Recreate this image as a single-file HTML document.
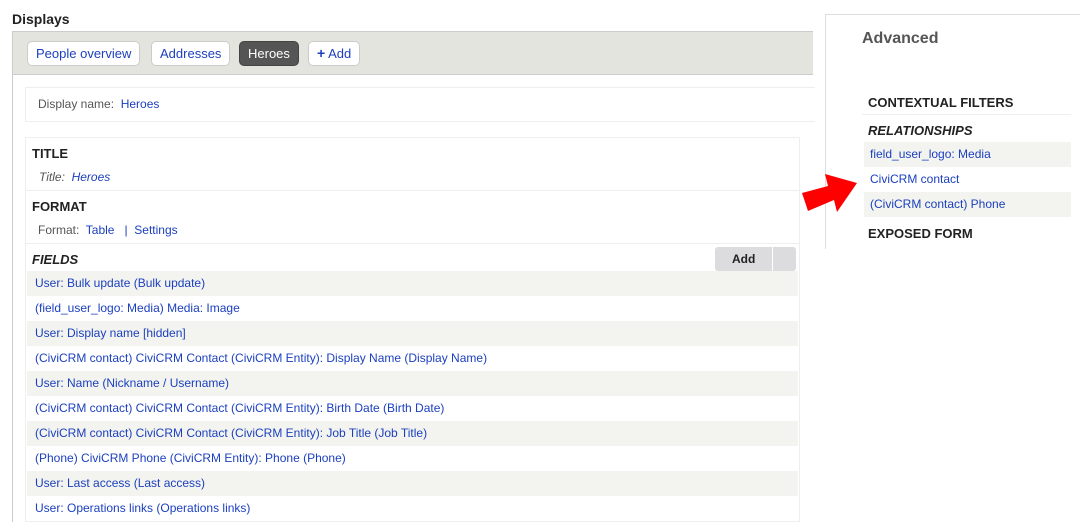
<!DOCTYPE html>
<html><head><meta charset="utf-8"><style>
*{box-sizing:border-box;margin:0;padding:0}
body{width:1080px;height:522px;overflow:hidden;background:#fff;font-family:"Liberation Sans",sans-serif;font-size:12px;color:#222;position:relative}
a,.l{color:#1b3fbf;text-decoration:none}
.abs{position:absolute}
.h{font-weight:bold;font-size:13px;color:#222}
.tab{position:absolute;top:41px;height:25px;border:1px solid #ccc;border-radius:5px;background:#fff;line-height:23px;padding:0 8px;font-size:13px}
.row{position:absolute;left:27px;width:771px;height:25px;line-height:25px;padding-left:8px}
.odd{background:#f3f4ef}
.rr{position:absolute;left:864px;width:207px;height:25px;line-height:25px;padding-left:6px}
</style></head><body>
<div class="abs h" style="left:12px;top:11px;font-size:14px">Displays</div>
<div class="abs" style="left:12px;top:31px;width:801px;height:491px;border-left:1px solid #ccc"></div>
<div class="abs" style="left:12px;top:31px;width:801px;height:44px;background:#e4e4df;border:1px solid #ccc;border-right:none"></div>
<div class="tab l" style="left:27px">People overview</div>
<div class="tab l" style="left:151px">Addresses</div>
<div class="tab" style="left:239px;background:#555;color:#fff;border-color:#444">Heroes</div>
<div class="tab l" style="left:308px"><b style="font-size:14px">+</b> Add</div>
<div class="abs" style="left:25px;top:87px;width:790px;height:35px;border:1px solid #eee;border-right:none;line-height:33px;padding-left:12px;color:#555">Display name:&nbsp; <span class="l">Heroes</span></div>
<div class="abs" style="left:25px;top:137px;width:775px;height:385px;border:1px solid #eee"></div>
<div class="abs h" style="left:32px;top:146px">TITLE</div>
<div class="abs" style="left:39px;top:170px;font-style:italic;color:#555">Title:&nbsp; <span class="l">Heroes</span></div>
<div class="abs" style="left:26px;top:190px;width:773px;border-top:1px solid #eee"></div>
<div class="abs h" style="left:32px;top:199px">FORMAT</div>
<div class="abs" style="left:38px;top:223px;color:#555">Format:&nbsp; <span class="l">Table</span> &nbsp;&nbsp;<span class="l">|</span>&nbsp; <span class="l">Settings</span></div>
<div class="abs" style="left:26px;top:243px;width:773px;border-top:1px solid #eee"></div>
<div class="abs h" style="left:32px;top:252px;font-style:italic">FIELDS</div>
<div class="abs" style="left:715px;top:247px;width:81px;height:24px;background:#dcdcdf;border-radius:3px;font-weight:bold;line-height:24px;padding-left:17px">Add<span class="abs" style="left:57px;top:0;height:24px;border-left:1px solid #fff"></span></div>
<div class="row odd l" style="top:271px">User: Bulk update (Bulk update)</div>
<div class="row l" style="top:296px">(field_user_logo: Media) Media: Image</div>
<div class="row odd l" style="top:321px">User: Display name [hidden]</div>
<div class="row l" style="top:346px">(CiviCRM contact) CiviCRM Contact (CiviCRM Entity): Display Name (Display Name)</div>
<div class="row odd l" style="top:371px">User: Name (Nickname / Username)</div>
<div class="row l" style="top:396px">(CiviCRM contact) CiviCRM Contact (CiviCRM Entity): Birth Date (Birth Date)</div>
<div class="row odd l" style="top:421px">(CiviCRM contact) CiviCRM Contact (CiviCRM Entity): Job Title (Job Title)</div>
<div class="row l" style="top:446px">(Phone) CiviCRM Phone (CiviCRM Entity): Phone (Phone)</div>
<div class="row odd l" style="top:471px">User: Last access (Last access)</div>
<div class="row l" style="top:496px">User: Operations links (Operations links)</div>
<div class="abs" style="left:825px;top:14px;width:260px;height:235px;border-left:1px solid #ddd;border-top:1px solid #ddd"></div>
<div class="abs" style="left:862px;top:30px;font-size:16px;font-weight:bold;color:#555">Advanced</div>
<div class="abs h" style="left:868px;top:95px">CONTEXTUAL FILTERS</div>
<div class="abs" style="left:862px;top:114px;width:209px;border-top:1px solid #eee"></div>
<div class="abs h" style="left:868px;top:123px;font-style:italic">RELATIONSHIPS</div>
<div class="rr odd l" style="top:142px">field_user_logo: Media</div>
<div class="rr l" style="top:167px">CiviCRM contact</div>
<div class="rr odd l" style="top:192px">(CiviCRM contact) Phone</div>
<div class="abs h" style="left:868px;top:226px">EXPOSED FORM</div>
<svg class="abs" style="left:0;top:0" width="1080" height="522"><polygon points="802,193 828,186 825,174 857,183 837,212 834,200 808,211" fill="#f00"/></svg>
</body></html>
